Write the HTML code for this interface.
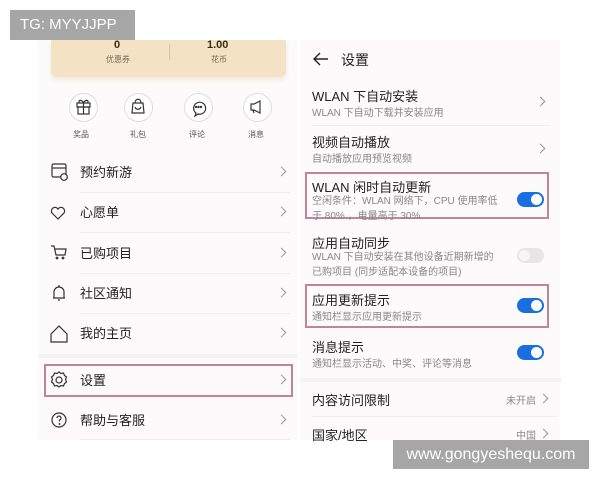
<!DOCTYPE html>
<html><head><meta charset="utf-8"><style>
*{margin:0;padding:0;box-sizing:border-box}
body{width:600px;height:480px;background:#fff;position:relative;overflow:hidden;font-family:"Liberation Sans","Noto Sans CJK SC",sans-serif;color:#222}
.a{position:absolute;white-space:nowrap}
.panel{position:absolute;background:#fcfafb}
.t{font-size:13px;color:#222}
.s{font-size:10px;color:#888}
.chev{position:absolute;width:7px;height:7px;border-right:1.2px solid #999;border-top:1.2px solid #999;transform:rotate(45deg)}
.sep{position:absolute;height:1px;background:#eee}
.tog{position:absolute;width:27px;height:15px;border-radius:8px;background:#1a6fe0}
.tog::after{content:"";position:absolute;right:2px;top:2px;width:11px;height:11px;border-radius:50%;background:#fff}
.tog.off{background:#e6e6e6}
.tog.off::after{left:2px;right:auto;background:#f6f6f6}
.box{position:absolute;border:2px solid #c4839d}
.circ{position:absolute;width:29px;height:29px;border-radius:50%;border:1px solid #ddd;background:#fff}
.ic{position:absolute}
</style></head><body>
<div class="panel" style="left:38px;top:40px;width:260px;height:400px"></div>
<div class="panel" style="left:300px;top:40px;width:261px;height:400px"></div>
<div class="a" style="left:51px;top:40px;width:235px;height:37px;background:#f3e2c4;border-radius:0 0 6px 6px;box-shadow:0 3px 5px #f1e9df"></div>
<div class="a" style="left:169px;top:44px;width:1px;height:16px;background:#d8c6a6"></div>
<div class="a" style="left:114px;top:39px;font-size:11px;font-weight:bold;color:#3a2a10">0</div>
<div class="a" style="left:106px;top:54px;font-size:8px;color:#7a6a50">优惠券</div>
<div class="a" style="left:207px;top:39px;font-size:11px;font-weight:bold;color:#3a2a10">1.00</div>
<div class="a" style="left:211px;top:54px;font-size:8px;color:#7a6a50">花币</div>

<div class="circ" style="left:69px;top:93px"></div>
<div class="circ" style="left:124px;top:93px"></div>
<div class="circ" style="left:184px;top:93px"></div>
<div class="circ" style="left:243px;top:93px"></div>
<svg class="ic" style="left:0;top:0" width="300" height="140" fill="none" stroke="#333" stroke-width="1.2">
<rect x="77" y="103" width="13" height="4"/><rect x="78" y="107" width="11" height="7"/><line x1="83.5" y1="103" x2="83.5" y2="114"/><path d="M83.5 103c-2-4-6-3-4 0M83.5 103c2-4 6-3 4 0"/>
<path d="M133 103h10l1 10h-12z"/><path d="M135 103c0-5 6-5 6 0"/><path d="M135 107c1 3 5 3 6 0"/>
<path d="M198 114l-3 2 1-3a6 6 0 1 1 2 1z"/><circle cx="196" cy="107" r=".6"/><circle cx="198.5" cy="107" r=".6"/><circle cx="201" cy="107" r=".6"/>
<path d="M251 104h3l6-3v12l-6-3h-3z"/><path d="M253 110l1 3"/>
</svg>
<div class="a" style="left:73px;top:129px;font-size:8px;color:#555">奖品</div>
<div class="a" style="left:130px;top:129px;font-size:8px;color:#555">礼包</div>
<div class="a" style="left:189px;top:129px;font-size:8px;color:#555">评论</div>
<div class="a" style="left:248px;top:129px;font-size:8px;color:#555">消息</div>

<svg class="ic" style="left:0;top:0" width="300" height="440" fill="none" stroke="#333" stroke-width="1.2">
<rect x="52" y="164" width="14" height="13" rx="1.5"/><line x1="52" y1="168" x2="66" y2="168"/><circle cx="64" cy="177" r="3.3" fill="#fcfafb"/>
<path d="M58 219l-6-6a3.5 3.5 0 0 1 6-4a3.5 3.5 0 0 1 6 4z"/>
<path d="M51 246h3l2 9h9l1-6h-11"/><circle cx="57" cy="258" r=".8"/><circle cx="63" cy="258" r=".8"/>
<path d="M53 298h12M54 298v-6a5 5 0 0 1 10 0v6M59 285v2M58 300h2"/>
<path d="M51 334l8-8 8 8v8h-16z"/>
<circle cx="59" cy="380" r="3"/><path d="M59 372l2 1.5 2.5-.5 1 2.5 2 1.5-1 2.5 1 2.5-2 1.5-1 2.5-2.5-.5-2 1.5-2-1.5-2.5.5-1-2.5-2-1.5 1-2.5-1-2.5 2-1.5 1-2.5 2.5.5z"/>
<circle cx="59" cy="420" r="7"/><path d="M57 418a2 2 0 1 1 2.5 2v1.5"/><circle cx="59.5" cy="424" r=".4"/>
</svg>
<div class="a t" style="left:80px;top:162px">预约新游</div>
<div class="a t" style="left:80px;top:202px">心愿单</div>
<div class="a t" style="left:80px;top:243px">已购项目</div>
<div class="a t" style="left:80px;top:283px">社区通知</div>
<div class="a t" style="left:80px;top:323px">我的主页</div>
<div class="a t" style="left:80px;top:370px">设置</div>
<div class="a t" style="left:80px;top:410px">帮助与客服</div>
<div class="chev" style="left:278px;top:168px"></div>
<div class="chev" style="left:278px;top:208px"></div>
<div class="chev" style="left:278px;top:249px"></div>
<div class="chev" style="left:278px;top:289px"></div>
<div class="chev" style="left:278px;top:329px"></div>
<div class="chev" style="left:278px;top:376px"></div>
<div class="chev" style="left:278px;top:416px"></div>
<div class="sep" style="left:80px;top:192px;width:210px"></div>
<div class="sep" style="left:80px;top:232px;width:210px"></div>
<div class="sep" style="left:80px;top:273px;width:210px"></div>
<div class="sep" style="left:80px;top:313px;width:210px"></div>
<div class="sep" style="left:38px;top:354px;width:260px;height:4px;background:#f6f3f5"></div>
<div class="sep" style="left:80px;top:439px;width:210px"></div>
<div class="box" style="left:44px;top:364px;width:249px;height:33px"></div>

<svg class="ic" style="left:312px;top:51px" width="18" height="16" fill="none" stroke="#222" stroke-width="1.4"><path d="M8 2L2 8l6 6M2 8h14"/></svg>
<div class="a" style="left:341px;top:50px;font-size:14px">设置</div>
<div class="a t" style="left:312px;top:86px">WLAN 下自动安装</div>
<div class="a s" style="left:312px;top:104px">WLAN 下自动下载并安装应用</div>
<div class="chev" style="left:537px;top:98px"></div>
<div class="sep" style="left:312px;top:125px;width:237px"></div>
<div class="a t" style="left:312px;top:132px">视频自动播放</div>
<div class="a s" style="left:312px;top:150px">自动播放应用预览视频</div>
<div class="chev" style="left:537px;top:145px"></div>
<div class="box" style="left:305px;top:172px;width:244px;height:47px"></div>
<div class="a t" style="left:312px;top:177px">WLAN 闲时自动更新</div>
<div class="a s" style="left:312px;top:194px;line-height:15px">空闲条件：WLAN 网络下，CPU 使用率低<br>于 80% ，电量高于 30%</div>
<div class="tog" style="left:517px;top:192px"></div>
<div class="a t" style="left:312px;top:233px">应用自动同步</div>
<div class="a s" style="left:312px;top:250px;line-height:15px">WLAN 下自动安装在其他设备近期新增的<br>已购项目 (同步适配本设备的项目)</div>
<div class="tog off" style="left:517px;top:248px"></div>
<div class="box" style="left:305px;top:284px;width:244px;height:44px"></div>
<div class="a t" style="left:312px;top:290px">应用更新提示</div>
<div class="a s" style="left:312px;top:308px">通知栏显示应用更新提示</div>
<div class="tog" style="left:517px;top:298px"></div>
<div class="a t" style="left:312px;top:337px">消息提示</div>
<div class="a s" style="left:312px;top:355px">通知栏显示活动、中奖、评论等消息</div>
<div class="tog" style="left:517px;top:345px"></div>
<div class="sep" style="left:300px;top:378px;width:261px;height:4px;background:#f6f3f5"></div>
<div class="a t" style="left:312px;top:390px">内容访问限制</div>
<div class="a s" style="left:506px;top:392px">未开启</div>
<div class="chev" style="left:540px;top:395px"></div>
<div class="sep" style="left:312px;top:416px;width:245px"></div>
<div class="a t" style="left:312px;top:425px">国家/地区</div>
<div class="a s" style="left:516px;top:427px">中国</div>
<div class="chev" style="left:540px;top:430px"></div>

<div class="a" style="left:10px;top:10px;width:125px;height:30px;background:#a6a6a6;color:#fff;font-size:15px;line-height:30px;padding-left:10px">TG: MYYJJPP</div>
<div class="a" style="left:393px;top:440px;width:196px;height:29px;background:#a6a6a6;color:#fff;font-size:16px;line-height:29px;text-align:center">www.gongyeshequ.com</div>
</body></html>
